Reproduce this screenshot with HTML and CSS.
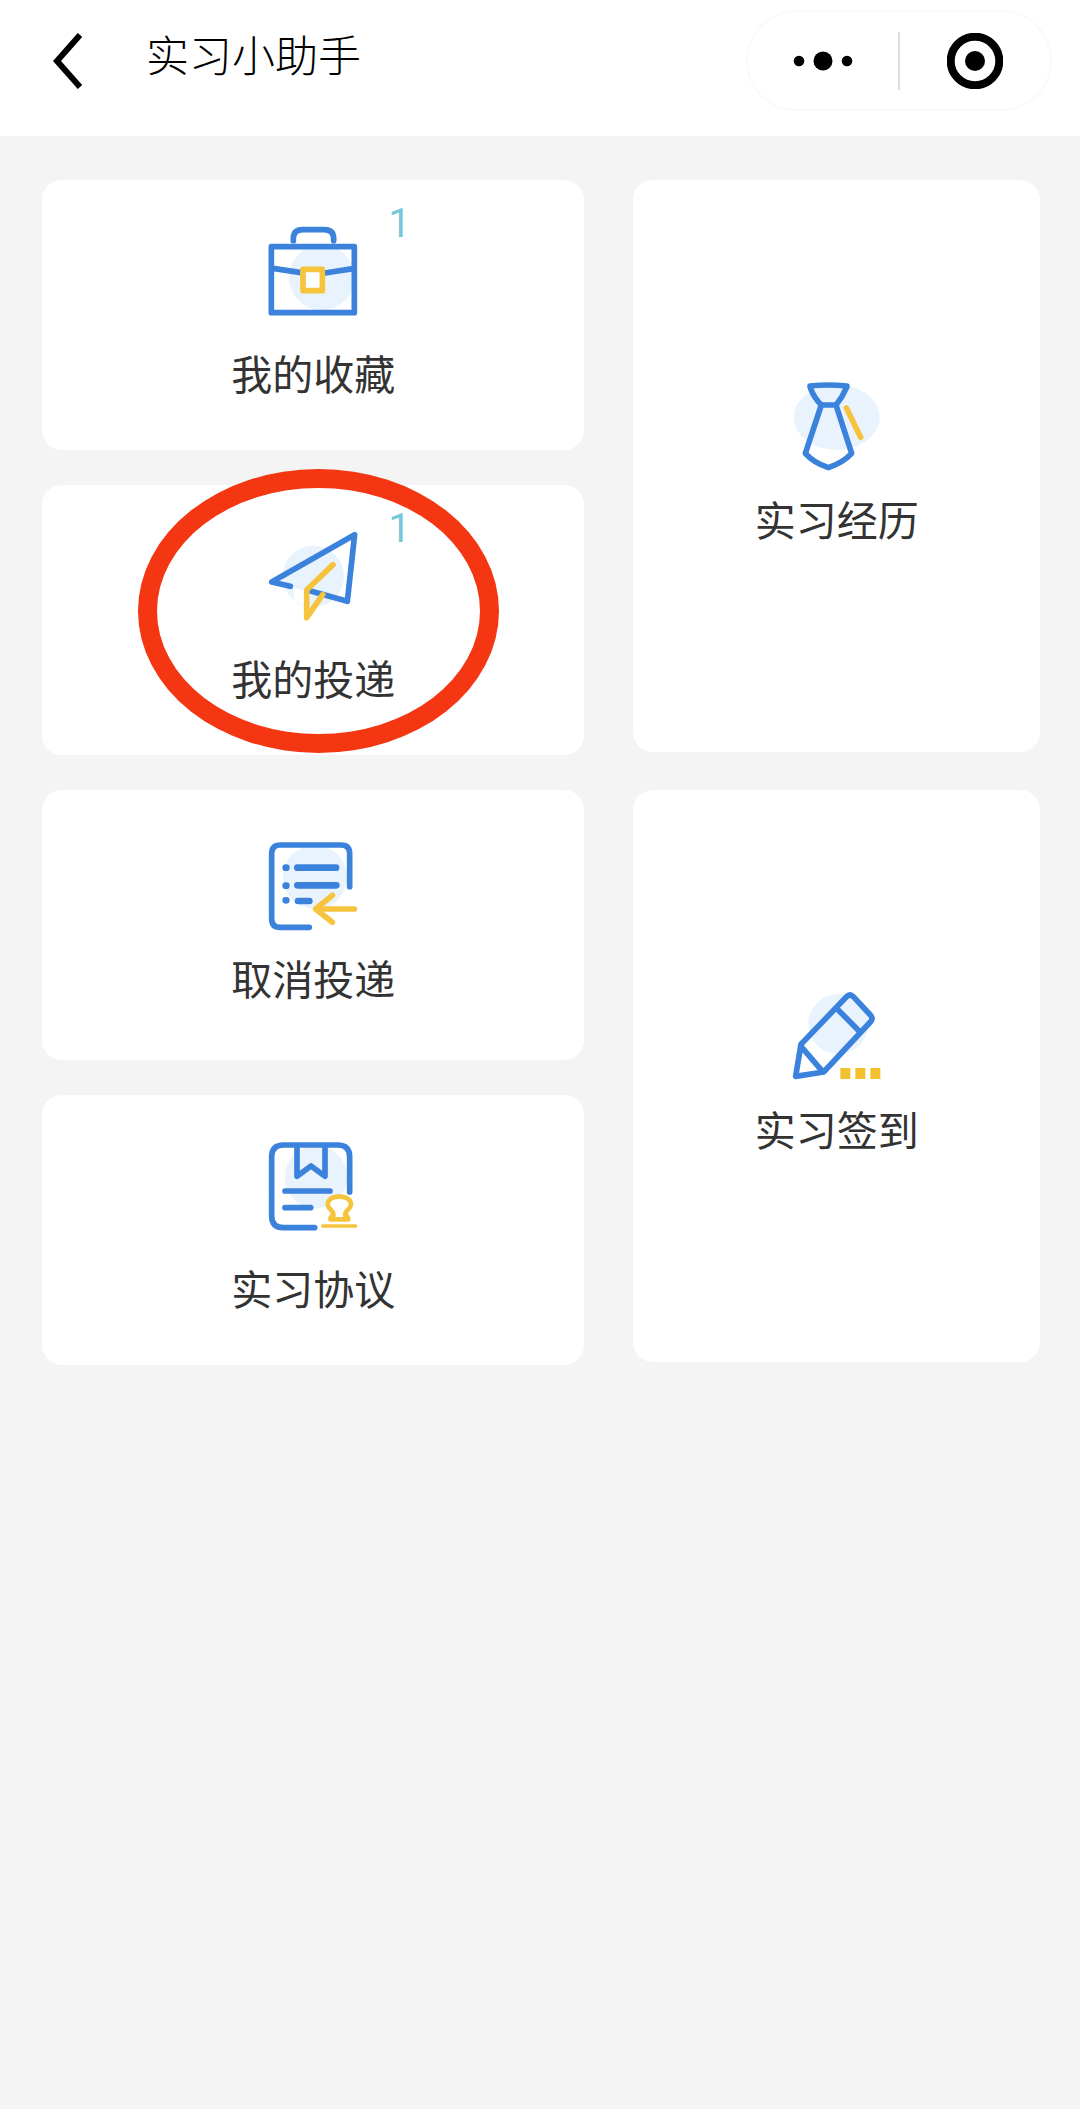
FILE: index.html
```html
<!DOCTYPE html>
<html lang="zh-CN">
<head>
<meta charset="utf-8">
<meta name="viewport" content="width=device-width, initial-scale=1">
<title>实习小助手</title>
<link rel="stylesheet" href="styles.css">
</head>
<body>
<header class="topbar">
  <button class="back" type="button" aria-label="返回">
    <svg width="30" height="56" viewBox="0 0 30 56"><path d="M28 2 5 28l23 26"/></svg>
  </button>
  <h1 class="title">实习小助手</h1>
  <div class="capsule">
    <button class="capsule-button" type="button" aria-label="更多">
      <svg width="60" height="20" viewBox="0 0 60 20"><circle cx="6" cy="10" r="5.3"/><circle cx="30" cy="10" r="9.5"/><circle cx="54" cy="10" r="5.3"/></svg>
    </button>
    <span class="divider"></span>
    <button class="capsule-button" type="button" aria-label="关闭">
      <svg width="56" height="56" viewBox="0 0 56 56"><circle class="ring" cx="28" cy="28" r="24.3"/><circle cx="28" cy="28" r="10"/></svg>
    </button>
  </div>
</header>

<main class="board">
  <div class="column column-left">
    <a class="tile" href="#favorites">
      <span class="icon-box">
        <svg class="icon" viewBox="144 110 264 264">
          <circle class="tint" cx="302" cy="262" r="98"/>
          <path class="line" d="M217 151v-6q0-27 28-27h65q28 0 28 27v6"/>
          <path class="line" d="M151 169h249v198H151zM156 234l84 13M312 248l84-13"/>
          <path class="accent box" d="M246 237h58v64h-58z"/>
        </svg>
        <span class="badge">1</span>
      </span>
      <span class="label">我的收藏</span>
    </a>
    <a class="tile" href="#applications">
      <span class="icon-box">
        <svg class="icon" viewBox="444 215 264 264">
          <circle class="tint" cx="577" cy="348" r="92"/>
          <path class="gap" d="m515 382 54 12-12 45-36-20z"/>
          <path class="line" d="m508 378-56-13 249-142-22 200-108-30"/>
          <path class="accent" d="m636 313-79 76v83l48-69"/>
        </svg>
        <span class="badge">1</span>
      </span>
      <span class="label">我的投递</span>
      <span class="highlight"></span>
    </a>
    <a class="tile tile-compact" href="#withdraw">
      <span class="icon-box">
        <svg class="icon" viewBox="144 67 264 264">
          <circle class="tint" cx="282" cy="172" r="96"/>
          <path class="line" d="M386 201V102q0-26-26-26H178q-26 0-26 26v195q0 26 26 26h87"/>
          <path class="line thick" d="M229 144h116M229 197h117M231 244h34"/>
          <path class="line thick" d="M194 144h2M194 198h2M194 242h2"/>
          <path class="accent" d="M400 268H284M334 227l-50 41 50 40"/>
        </svg>
      </span>
      <span class="label">取消投递</span>
    </a>
    <a class="tile" href="#agreement">
      <span class="icon-box">
        <svg class="icon" viewBox="144 67 264 264">
          <circle class="tint" cx="285" cy="172" r="94"/>
          <path class="line" d="M386 217V112q0-36-36-36H188q-36 0-36 36v176q0 36 36 36h93"/>
          <path class="line" d="M228 80v90l42-31 42 31V80M192 214h135M192 264h77"/>
          <path class="accent stamp" d="M328 299q0-9 9-11 2-8-6-16c-24-22-4-41 24-41s48 19 24 41q-8 8-6 16 9 2 9 11z"/>
          <path class="accent thin" d="M305 319h99"/>
        </svg>
      </span>
      <span class="label">实习协议</span>
    </a>
  </div>
  <div class="column column-right">
    <a class="tile tile-tall" href="#experience">
      <span class="icon-box">
        <svg class="icon" viewBox="190 66 264 264">
          <ellipse class="tint" cx="321" cy="172" rx="129" ry="98"/>
          <path class="line" d="M241 78q54-6 111 0 0 3-3 8-12 28-30 49h-44q-21-21-32-49-3-5-2-8zM275 135 227 280q25 28 69 43 44-15 70-43l-47-145"/>
          <path class="accent" d="m350 144 43 88"/>
        </svg>
      </span>
      <span class="label">实习经历</span>
    </a>
    <a class="tile tile-tall" href="#checkin">
      <span class="icon-box">
        <svg class="icon" viewBox="186 61 264 264">
          <circle class="tint" cx="322" cy="157" r="90"/>
          <path class="line" d="m210 218 138-144q10-8 19 1l51 55q10 10 0 21L278 301l-84 13zM210 224l65 76M318 111l69 70"/>
          <path class="accent-fill" d="M328 289h30v33h-30zM373 289h30v33h-30zM418 289h30v33h-30z"/>
        </svg>
      </span>
      <span class="label">实习签到</span>
    </a>
  </div>
</main>
</body>
</html>
```
FILE: styles.css
```css
* {
  box-sizing: border-box;
}

body {
  margin: 0;
  min-height: 100vh;
  background: #f4f4f4;
  color: #333;
  font-family: "Noto Sans CJK SC", sans-serif;
}

button {
  padding: 0;
  border: 0;
  background: none;
}

svg {
  display: block;
}

.topbar {
  display: flex;
  align-items: center;
  padding: 10px 28px 25px 52px;
  background: #fff;
}

.back path {
  fill: none;
  stroke: #000;
  stroke-width: 6;
}

.title {
  flex: 1;
  margin: 0 0 16px 64px;
  color: #000;
  font-size: 43px;
  font-weight: 300;
  line-height: 48px;
}

.capsule {
  display: flex;
  align-items: center;
  width: 306px;
  height: 101px;
  border: 2px solid #fafafa;
  border-radius: 51px;
}

.capsule-button {
  display: flex;
  flex: 1;
  align-items: center;
  justify-content: center;
  height: 100%;
}

.ring {
  fill: none;
  stroke: #000;
  stroke-width: 8;
}

.divider {
  width: 2px;
  height: 58px;
  background: #ddd;
}

.board {
  display: grid;
  grid-template-columns: 4fr 3fr;
  gap: 49px;
  align-items: start;
  padding: 44px 40px 44px 42px;
}

.column {
  display: flex;
  flex-direction: column;
}

.column-left {
  gap: 35px;
}

.column-right {
  gap: 38px;
}

.tile {
  position: relative;
  display: flex;
  flex-direction: column;
  align-items: center;
  gap: 33px;
  min-height: 270px;
  padding-top: 47px;
  border-radius: 20px;
  background: #fff;
  color: inherit;
  text-decoration: none;
}

.tile-compact {
  gap: 23px;
  padding-top: 52px;
}

.tile-tall {
  gap: 24px;
  min-height: 572px;
  padding-top: 202px;
}

.icon-box {
  position: relative;
}

.icon {
  width: 88px;
  height: 88px;
  overflow: visible;
}

.label {
  font-size: 41px;
  line-height: 48px;
}

.badge {
  position: absolute;
  top: -27px;
  left: 119px;
  color: #74c8da;
  font-family: Roboto, sans-serif;
  font-size: 40px;
  line-height: 48px;
}

.highlight {
  position: absolute;
  top: -16px;
  left: calc(50% - 175px);
  width: 361px;
  height: 284px;
  border: 19px solid #f43612;
  border-radius: 50%;
  pointer-events: none;
}

.tint {
  fill: #e9f3fd;
}

.gap {
  fill: #fff;
}

.line,
.accent {
  fill: none;
  stroke: #3b82dd;
  stroke-width: 17;
  stroke-linecap: round;
  stroke-linejoin: round;
}

.thick {
  stroke-width: 20;
}

.accent {
  stroke: #f6c33c;
}

.box {
  fill: #fff;
}

.stamp {
  fill: #fff;
  stroke-width: 14;
}

.thin {
  stroke-width: 10;
}

.accent-fill {
  fill: #f2c130;
}
```
